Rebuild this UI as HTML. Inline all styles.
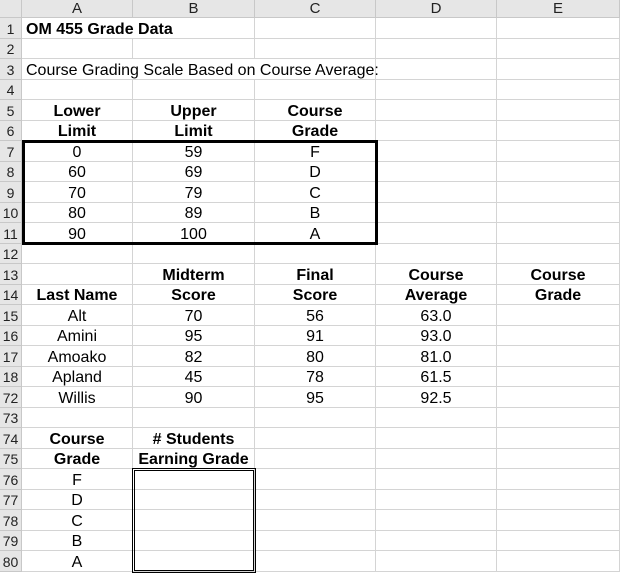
<!DOCTYPE html>
<html><head><style>
*{margin:0;padding:0;box-sizing:border-box}
body{width:621px;height:575px;background:#fff;font-family:"Liberation Sans",Arial,sans-serif;font-size:16px;color:#000;overflow:hidden;position:relative}
.g{display:grid;grid-template-columns:22px 111px 122px 121px 121px 123px;grid-template-rows:18px repeat(27,20.5px);}
.g>div{border-right:1px solid #d4d4d4;border-bottom:1px solid #d4d4d4;white-space:nowrap;display:flex;align-items:flex-end;justify-content:center;padding-bottom:0;line-height:17px}
.g>div.h{background:#e6e6e6;border-color:#c8c8c8;color:#222;align-items:center;font-size:15px;padding:0}
.g>div.r{background:#e6e6e6;border-color:#c8c8c8;color:#222;justify-content:center;font-size:14px}
.b{font-weight:bold}
.l{justify-content:flex-start!important;padding-left:4px}
.box{position:absolute;border:3px solid #000;left:22px;top:140px;width:356px;height:105px}
.dbl{position:absolute;border:3px double #000;left:132px;top:468px;width:124px;height:105px}
</style></head><body>
<div class="g">
<div class="h"></div><div class="h">A</div><div class="h">B</div><div class="h">C</div><div class="h">D</div><div class="h">E</div>
<div class="r">1</div><div class="b l" style="grid-column:span 2;justify-content:flex-start">OM 455 Grade Data</div><div></div><div></div><div></div>
<div class="r">2</div><div></div><div></div><div></div><div></div><div></div>
<div class="r">3</div><div class="l" style="grid-column:span 3">Course Grading Scale Based on Course Average:</div><div></div><div></div>
<div class="r">4</div><div></div><div></div><div></div><div></div><div></div>
<div class="r">5</div><div class="b">Lower</div><div class="b">Upper</div><div class="b">Course</div><div></div><div></div>
<div class="r">6</div><div class="b">Limit</div><div class="b">Limit</div><div class="b">Grade</div><div></div><div></div>
<div class="r">7</div><div>0</div><div>59</div><div>F</div><div></div><div></div>
<div class="r">8</div><div>60</div><div>69</div><div>D</div><div></div><div></div>
<div class="r">9</div><div>70</div><div>79</div><div>C</div><div></div><div></div>
<div class="r">10</div><div>80</div><div>89</div><div>B</div><div></div><div></div>
<div class="r">11</div><div>90</div><div>100</div><div>A</div><div></div><div></div>
<div class="r">12</div><div></div><div></div><div></div><div></div><div></div>
<div class="r">13</div><div></div><div class="b">Midterm</div><div class="b">Final</div><div class="b">Course</div><div class="b">Course</div>
<div class="r">14</div><div class="b">Last Name</div><div class="b">Score</div><div class="b">Score</div><div class="b">Average</div><div class="b">Grade</div>
<div class="r">15</div><div>Alt</div><div>70</div><div>56</div><div>63.0</div><div></div>
<div class="r">16</div><div>Amini</div><div>95</div><div>91</div><div>93.0</div><div></div>
<div class="r">17</div><div>Amoako</div><div>82</div><div>80</div><div>81.0</div><div></div>
<div class="r">18</div><div>Apland</div><div>45</div><div>78</div><div>61.5</div><div></div>
<div class="r">72</div><div>Willis</div><div>90</div><div>95</div><div>92.5</div><div></div>
<div class="r">73</div><div></div><div></div><div></div><div></div><div></div>
<div class="r">74</div><div class="b">Course</div><div class="b"># Students</div><div></div><div></div><div></div>
<div class="r">75</div><div class="b">Grade</div><div class="b">Earning Grade</div><div></div><div></div><div></div>
<div class="r">76</div><div>F</div><div></div><div></div><div></div><div></div>
<div class="r">77</div><div>D</div><div></div><div></div><div></div><div></div>
<div class="r">78</div><div>C</div><div></div><div></div><div></div><div></div>
<div class="r">79</div><div>B</div><div></div><div></div><div></div><div></div>
<div class="r">80</div><div>A</div><div></div><div></div><div></div><div></div>
</div>
<div class="box"></div>
<div class="dbl"></div>
</body></html>
